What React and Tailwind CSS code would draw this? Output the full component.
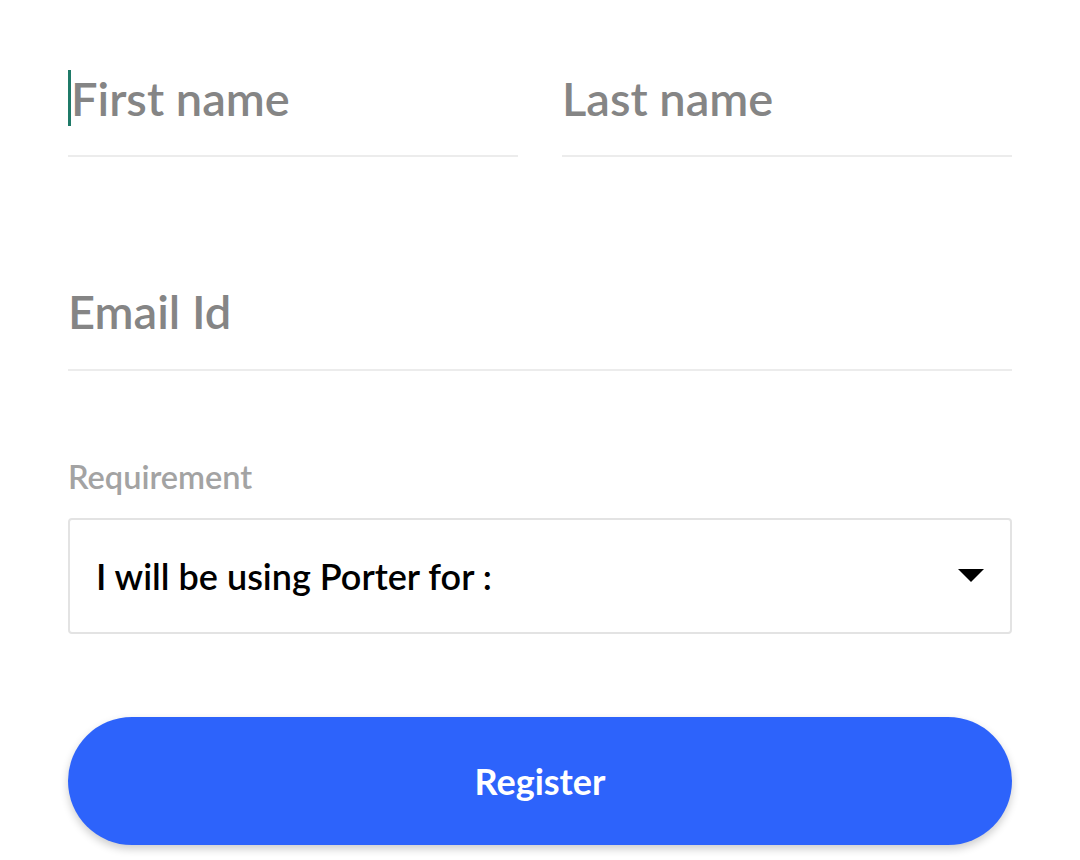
export default function App() {
  return (
    <div className="min-h-[860px] w-[1080px] bg-white px-[68px] pt-[66px]" style={{ fontFamily: 'Lato, "Noto Sans", sans-serif' }}>
      <div className="flex gap-[44px]">
        <div className="flex-1">
          <div className="flex h-[64px] items-center">
            <span className="h-[56px] w-[3px] bg-[#1f7a68]" />
            <span className="text-[47px] font-semibold leading-none text-[#858585]">First name</span>
          </div>
          <div className="mt-[25px] h-[2px] bg-[#ececec]" />
        </div>
        <div className="flex-1">
          <div className="flex h-[64px] items-center">
            <span className="text-[47px] font-semibold leading-none text-[#858585]">Last name</span>
          </div>
          <div className="mt-[25px] h-[2px] bg-[#ececec]" />
        </div>
      </div>

      <div className="mt-[122px]">
        <div className="flex h-[64px] items-center">
          <span className="text-[47px] font-semibold leading-none text-[#858585]">Email Id</span>
        </div>
        <div className="mt-[26px] h-[2px] bg-[#ececec]" />
      </div>

      <div className="mt-[90px] text-[32.5px] font-semibold leading-none text-[#a3a3a3]">Requirement</div>

      <div className="mt-[24px] flex h-[116px] items-center justify-between rounded-[4px] border-2 border-[#e3e3e3] pl-[26px] pr-[26px]">
        <span className="text-[36px] font-semibold text-black">I will be using Porter for :</span>
        <svg width="26" height="14" viewBox="0 0 26 14">
          <path d="M0 0 H26 L13 13 Z" fill="#000" />
        </svg>
      </div>

      <button className="mt-[83px] flex h-[128px] w-full items-center justify-center rounded-full bg-[#2d63fb] text-[36px] font-bold text-white shadow-[0_4px_8px_rgba(0,0,0,0.2)]">
        Register
      </button>
    </div>
  )
}
